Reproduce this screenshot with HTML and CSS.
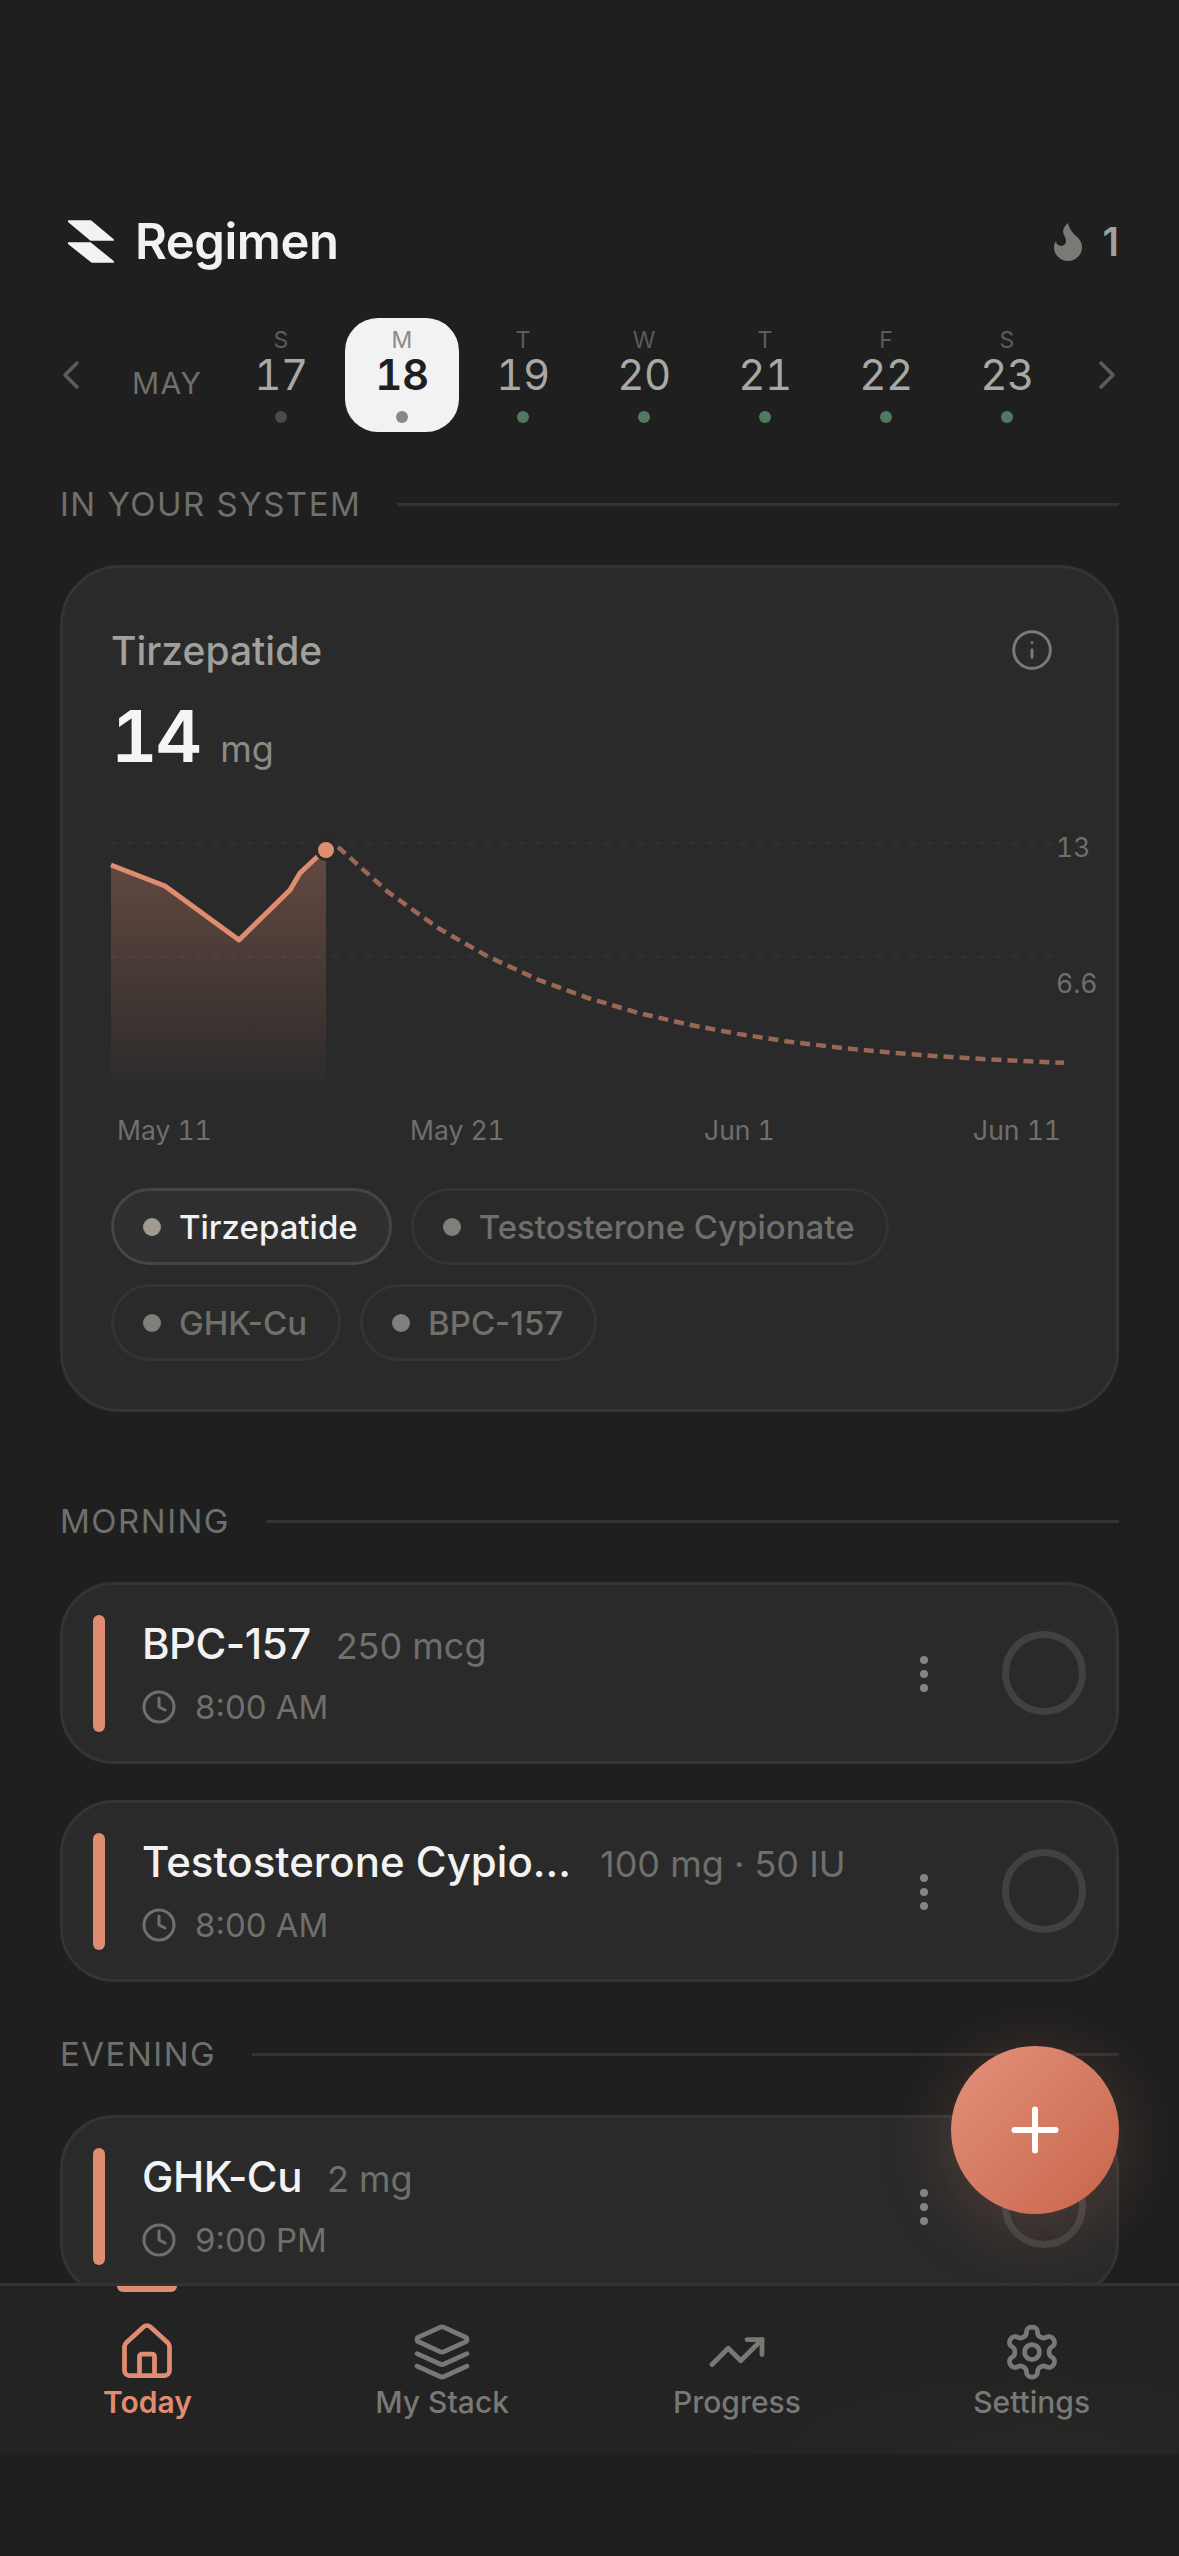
FILE: index.html
```html
<!DOCTYPE html>
<html lang="en">
<head>
  <meta charset="UTF-8">
  <title>Regimen</title>
  <link rel="stylesheet" href="styles.css">
</head>
<body>
<div class="screen">
  <div class="content">

    <header class="topbar">
      <div class="brand">
        <svg class="brand-mark" viewBox="0 0 50 45">
          <path d="M2 1.5a1 1 0 0 1 .7-.3H25L48 20.500v1.200H24.500L2 3z"/>
          <path d="M2 23.300H24.500L48 42.200v1.600H26a1 1 0 0 1-.7-.3L2 25z"/>
        </svg>
        <span class="brand-name">Regimen</span>
      </div>
      <div class="streak">
        <svg class="streak-icon" viewBox="0 0 24 24"><path d="M8.500 14.500A2.500 2.500 0 0 0 11 12c0-1.380-.5-2-1-3-1.072-2.143-.224-4.054 2-6 .5 2.500 2 4.900 4 6.500 2 1.600 3 3.500 3 5.500a7 7 0 1 1-14 0c0-1.153.433-2.294 1-3a2.500 2.500 0 0 0 2.500 2.500z"/></svg>
        <span class="streak-count">1</span>
      </div>
    </header>

    <div class="calendar">
      <svg class="cal-arrow cal-prev" viewBox="0 0 24 24"><path d="m15 18-6-6 6-6"/></svg>
      <span class="cal-month">MAY</span>
      <div class="cal-days">
        <div class="day"><span class="day-letter">S</span><span class="day-num">17</span><i class="day-dot dot-past"></i></div>
        <div class="day day-active"><span class="day-letter">M</span><span class="day-num">18</span><i class="day-dot"></i></div>
        <div class="day"><span class="day-letter">T</span><span class="day-num">19</span><i class="day-dot dot-green"></i></div>
        <div class="day"><span class="day-letter">W</span><span class="day-num">20</span><i class="day-dot dot-green"></i></div>
        <div class="day"><span class="day-letter">T</span><span class="day-num">21</span><i class="day-dot dot-green"></i></div>
        <div class="day"><span class="day-letter">F</span><span class="day-num">22</span><i class="day-dot dot-green"></i></div>
        <div class="day"><span class="day-letter">S</span><span class="day-num">23</span><i class="day-dot dot-green"></i></div>
      </div>
      <svg class="cal-arrow cal-next" viewBox="0 0 24 24"><path d="m9 18 6-6-6-6"/></svg>
    </div>

    <div class="section-head"><span>IN YOUR SYSTEM</span></div>

    <section class="system-card">
      <div class="system-top">
        <span class="system-title">Tirzepatide</span>
        <svg class="info-icon" viewBox="0 0 24 24"><circle cx="12" cy="12" r="10"/><path d="M12 16v-4"/><path d="M12 8h.01"/></svg>
      </div>
      <div class="system-value"><strong>14</strong><span>mg</span></div>

      <svg class="chart" viewBox="0 0 1005 330">
        <defs>
          <linearGradient id="areaFade" x1="0" y1="0" x2="0" y2="1">
            <stop offset="0" stop-color="#e08c70" stop-opacity="0.32"/>
            <stop offset="1" stop-color="#e08c70" stop-opacity="0"/>
          </linearGradient>
        </defs>
        <path class="grid-line" d="M0 23H953"/>
        <path class="grid-line" d="M0 137H953"/>
        <path d="M0 45L54 66L128 120L179 70L189 53L206 37L215 30V275H0z" fill="url(#areaFade)"/>
        <polyline class="line-past" points="0,45 54,66 128,120 179,70 189,53 206,37 215,30"/>
        <polyline class="line-future" points="227,27 277,71.900 327,107.900 377,136.600 427,159.600 477,178 527,192.800 577,204.500 627,213.900 677,221.500 727,227.500 777,232.300 827,236.200 877,239.300 927,241.700 953,242.800"/>
        <circle class="line-dot" cx="215" cy="30" r="9.500"/>
        <text class="axis-label" x="945" y="37">13</text>
        <text class="axis-label" x="945" y="173">6.6</text>
        <text class="axis-label" x="6" y="320">May 11</text>
        <text class="axis-label" x="299" y="320">May 21</text>
        <text class="axis-label" x="593" y="320">Jun 1</text>
        <text class="axis-label" x="950" y="320" text-anchor="end">Jun 11</text>
      </svg>

      <div class="chips">
        <div class="chip chip-active"><i></i>Tirzepatide</div>
        <div class="chip"><i></i>Testosterone Cypionate</div>
        <div class="chip"><i></i>GHK-Cu</div>
        <div class="chip"><i></i>BPC-157</div>
      </div>
    </section>

    <div class="section-head"><span>MORNING</span></div>

    <div class="dose-list">
      <div class="dose">
        <i class="dose-bar"></i>
        <div class="dose-text">
          <div class="dose-top"><span class="dose-name">BPC-157</span><span class="dose-amount">250 mcg</span></div>
          <div class="dose-time">
            <svg viewBox="0 0 24 24"><circle cx="12" cy="12" r="10"/><path d="M12 6v6l4 2"/></svg>
            8:00 AM
          </div>
        </div>
        <div class="dose-more"><i></i><i></i><i></i></div>
        <div class="dose-check"></div>
      </div>

      <div class="dose">
        <i class="dose-bar"></i>
        <div class="dose-text">
          <div class="dose-top"><span class="dose-name name-long">Testosterone Cypio…</span><span class="dose-amount">100 mg · 50 IU</span></div>
          <div class="dose-time">
            <svg viewBox="0 0 24 24"><circle cx="12" cy="12" r="10"/><path d="M12 6v6l4 2"/></svg>
            8:00 AM
          </div>
        </div>
        <div class="dose-more"><i></i><i></i><i></i></div>
        <div class="dose-check"></div>
      </div>
    </div>

    <div class="section-head"><span>EVENING</span></div>

    <div class="dose-list">
      <div class="dose">
        <i class="dose-bar"></i>
        <div class="dose-text">
          <div class="dose-top"><span class="dose-name">GHK-Cu</span><span class="dose-amount">2 mg</span></div>
          <div class="dose-time">
            <svg viewBox="0 0 24 24"><circle cx="12" cy="12" r="10"/><path d="M12 6v6l4 2"/></svg>
            9:00 PM
          </div>
        </div>
        <div class="dose-more"><i></i><i></i><i></i></div>
        <div class="dose-check"></div>
      </div>
    </div>

  </div>

  <nav class="tabbar">
    <div class="tab tab-active">
      <svg viewBox="0 0 24 24">
        <path d="M15 21.400V13.800a1 1 0 0 0-1-1h-4a1 1 0 0 0-1 1v7.600"/>
        <path d="M3 9.800a2 2 0 0 1 .7-1.500l7-6.400a2 2 0 0 1 2.600 0l7 6.400a2 2 0 0 1 .7 1.500v9.600a2 2 0 0 1-2 2H5a2 2 0 0 1-2-2z"/>
      </svg>
      <span>Today</span>
    </div>
    <div class="tab">
      <svg viewBox="0 0 24 24">
        <path d="m12.830 2.180a2 2 0 0 0-1.660 0L2.600 6.080a1 1 0 0 0 0 1.830l8.580 3.910a2 2 0 0 0 1.660 0l8.580-3.900a1 1 0 0 0 0-1.830Z"/>
        <path d="m22 17.650-9.170 4.160a2 2 0 0 1-1.660 0L2 17.650"/>
        <path d="m22 12.650-9.170 4.160a2 2 0 0 1-1.660 0L2 12.650"/>
      </svg>
      <span>My Stack</span>
    </div>
    <div class="tab">
      <svg viewBox="0 0 24 24">
        <polyline points="22 7 13.500 15.500 8.500 10.500 2 17"/>
        <polyline points="16 7 22 7 22 13"/>
      </svg>
      <span>Progress</span>
    </div>
    <div class="tab">
      <svg viewBox="0 0 24 24">
        <path d="M12.220 2h-.44a2 2 0 0 0-2 2v.18a2 2 0 0 1-1 1.730l-.43.25a2 2 0 0 1-2 0l-.15-.08a2 2 0 0 0-2.730.73l-.22.38a2 2 0 0 0 .73 2.730l.15.1a2 2 0 0 1 1 1.720v.51a2 2 0 0 1-1 1.740l-.15.09a2 2 0 0 0-.73 2.730l.22.38a2 2 0 0 0 2.730.73l.15-.08a2 2 0 0 1 2 0l.43.25a2 2 0 0 1 1 1.730V20a2 2 0 0 0 2 2h.44a2 2 0 0 0 2-2v-.18a2 2 0 0 1 1-1.730l.43-.25a2 2 0 0 1 2 0l.15.08a2 2 0 0 0 2.730-.73l.22-.39a2 2 0 0 0-.73-2.730l-.15-.08a2 2 0 0 1-1-1.740v-.5a2 2 0 0 1 1-1.740l.15-.09a2 2 0 0 0 .73-2.730l-.22-.38a2 2 0 0 0-2.730-.73l-.15.08a2 2 0 0 1-2 0l-.43-.25a2 2 0 0 1-1-1.730V4a2 2 0 0 0-2-2z"/>
        <circle cx="12" cy="12" r="3"/>
      </svg>
      <span>Settings</span>
    </div>
  </nav>

  <button class="fab" type="button">
    <svg viewBox="0 0 48 48"><path d="M24 3.500v41M3.500 24h41"/></svg>
  </button>
</div>
</body>
</html>
```

FILE: styles.css
```css
* {
  box-sizing: border-box;
}

body {
  margin: 0;
  background: #1f1f1f;
  font-family: "Inter", "Liberation Sans", sans-serif;
}

.screen {
  position: relative;
  height: 2556px;
  overflow: hidden;
  background: #1f1f1f;
}

.content {
  padding: 210px 60px 0;
}

/* header */
.topbar {
  display: flex;
  justify-content: space-between;
  align-items: center;
  height: 62px;
}

.brand {
  display: flex;
  align-items: center;
  gap: 19px;
}

.brand-mark {
  width: 50px;
  height: 45px;
  margin-left: 6px;
  fill: #f2f2f2;
}

.brand-name {
  font-size: 49px;
  font-weight: 600;
  letter-spacing: -0.5px;
  color: #f2f2f2;
}

.streak {
  display: flex;
  align-items: center;
  gap: 11px;
}

.streak-icon {
  width: 48px;
  height: 48px;
  fill: #7a7a76;
}

.streak-count {
  font-size: 39px;
  font-weight: 600;
  color: #a0a09c;
}

/* week strip */
.calendar {
  display: flex;
  align-items: center;
  margin: 46px -48px 0 -13px;
}

.cal-arrow {
  width: 48px;
  height: 48px;
  fill: none;
  stroke: #5c5c59;
  stroke-width: 1.800;
  stroke-linecap: round;
  stroke-linejoin: round;
}

.cal-month {
  width: 129px;
  padding: 15px 0 0 37px;
  font-size: 30px;
  letter-spacing: 1.500px;
  color: #6f6f6b;
}

.cal-days {
  display: flex;
  gap: 7px;
  margin-right: 19px;
}

.day {
  display: flex;
  flex-direction: column;
  align-items: center;
  width: 114px;
  height: 114px;
  padding-top: 10px;
  border-radius: 33px;
}

.day-letter {
  height: 24px;
  line-height: 24px;
  font-size: 23px;
  color: #5c5c59;
}

.day-num {
  height: 50px;
  margin-top: -2px;
  line-height: 50px;
  font-size: 42px;
  letter-spacing: -0.500px;
  font-variant-numeric: tabular-nums;
  color: #a8a8a4;
}

.day-dot {
  width: 12px;
  height: 12px;
  margin-top: 11px;
  border-radius: 50%;
  background: #888886;
}

.dot-past {
  background: #4a4a48;
}

.dot-green {
  background: #4f7a5f;
}

.day-active {
  background: #f2f2f2;
}

.day-active .day-letter {
  color: #8a8a86;
}

.day-active .day-num {
  font-weight: 600;
  color: #1f1f1f;
}

/* section headings */
.section-head {
  display: flex;
  align-items: center;
  gap: 36px;
  height: 40px;
  margin: 52px 0 41px;
  font-size: 33px;
  letter-spacing: 1.500px;
  color: #6f6f6b;
}

.section-head::after {
  content: "";
  flex: 1;
  height: 3px;
  background: #333331;
}

/* in your system card */
.system-card {
  height: 847px;
  margin-bottom: 89px;
  padding: 58px 48px 0;
  border: 3px solid #343434;
  border-radius: 60px;
  background: #2a2a2a;
}

.system-top {
  display: flex;
  justify-content: space-between;
  align-items: center;
  height: 48px;
}

.system-title {
  font-size: 39px;
  font-weight: 500;
  color: #a0a09c;
}

.info-icon {
  width: 44px;
  height: 44px;
  margin-right: 14px;
  fill: none;
  stroke: #7a7a76;
  stroke-width: 1.600;
  stroke-linecap: round;
}

.system-value {
  display: flex;
  align-items: baseline;
  gap: 20px;
  height: 72px;
  margin-top: 26px;
  line-height: 72px;
}

.system-value strong {
  font-size: 72px;
  font-weight: 600;
  letter-spacing: -2px;
  font-variant-numeric: tabular-nums;
  color: #f5f5f5;
}

.system-value span {
  font-size: 36px;
  color: #8a8a86;
}

.chart {
  display: block;
  width: 1005px;
  height: 330px;
  margin-top: 48px;
  overflow: visible;
}

.grid-line {
  fill: none;
  stroke: #ffffff;
  stroke-opacity: 0.035;
  stroke-width: 3;
  stroke-dasharray: 6 11;
}

.line-past {
  fill: none;
  stroke: #e08c70;
  stroke-width: 5;
  stroke-linejoin: round;
}

.line-future {
  fill: none;
  stroke: #e08c70;
  stroke-opacity: 0.62;
  stroke-width: 4.500;
  stroke-dasharray: 10 6;
}

.line-dot {
  fill: #e08c70;
  stroke: #2a2a2a;
  stroke-width: 3;
}

.axis-label {
  font-size: 26.500px;
  font-variant-numeric: tabular-nums;
  fill: #6f6f6b;
}

.chips {
  display: flex;
  flex-wrap: wrap;
  gap: 19px;
  margin-top: 38px;
}

.chip {
  display: flex;
  align-items: center;
  gap: 18px;
  height: 77px;
  padding: 0 31px 0 29px;
  border: 3px solid #343434;
  border-radius: 39px;
  font-size: 33px;
  font-weight: 500;
  color: #6f6f6b;
}

.chip i {
  width: 18px;
  height: 18px;
  border-radius: 50%;
  background: #7f7f7b;
}

.chip-active {
  border-color: #454543;
  background: #2f2f2f;
  color: #f2f2f2;
}

.chip-active i {
  background: #a09a90;
}

/* dose rows */
.dose-list {
  display: flex;
  flex-direction: column;
  gap: 36px;
}

.dose {
  display: flex;
  align-items: center;
  flex: none;
  height: 182px;
  padding: 0 30px 0 30px;
  border: 3px solid #343434;
  border-radius: 54px;
  background: #2a2a2a;
}

.dose-bar {
  width: 12px;
  height: 117px;
  border-radius: 6px;
  background: #e08c70;
}

.dose-text {
  margin-left: 37px;
}

.dose-top {
  display: flex;
  align-items: baseline;
  gap: 25px;
  height: 50px;
  line-height: 50px;
}

.dose-name {
  font-size: 42px;
  font-weight: 500;
  letter-spacing: -0.500px;
  color: #f2f2f2;
}

.name-long {
  margin-right: 4px;
  letter-spacing: 0;
}

.dose-amount {
  font-size: 36px;
  color: #6f6f6b;
}

.dose-time {
  display: flex;
  align-items: center;
  gap: 18px;
  height: 40px;
  margin-top: 18px;
  font-size: 33px;
  color: #6f6f6b;
}

.dose-time svg {
  width: 36px;
  height: 36px;
  margin-left: -1px;
  fill: none;
  stroke: #6f6f6b;
  stroke-width: 2;
  stroke-linecap: round;
  stroke-linejoin: round;
}

.dose-more {
  display: flex;
  flex-direction: column;
  gap: 6px;
  margin: 2px 74px 0 auto;
}

.dose-more i {
  width: 8px;
  height: 8px;
  border-radius: 50%;
  background: #858582;
}

.dose-check {
  width: 84px;
  height: 84px;
  border: 7px solid #414140;
  border-radius: 50%;
}

/* bottom tabs */
.tabbar {
  position: absolute;
  left: 0;
  right: 0;
  top: 2283px;
  display: flex;
  height: 171px;
  padding-top: 36px;
  border-top: 3px solid #333331;
  background: radial-gradient(ellipse 300px 90px at 88% 100%, rgba(224, 140, 112, 0.03), transparent), #232323;
}

.tab {
  position: relative;
  display: flex;
  flex-direction: column;
  align-items: center;
  flex: 1;
  font-size: 30px;
  font-weight: 500;
  line-height: 40px;
  color: #787875;
}

.tab svg {
  width: 60px;
  height: 60px;
  fill: none;
  stroke: currentColor;
  stroke-width: 1.900;
  stroke-linecap: round;
  stroke-linejoin: round;
}

.tab-active {
  font-weight: 600;
  color: #e08c70;
}

.tab-active::before {
  content: "";
  position: absolute;
  top: -36px;
  width: 60px;
  height: 6px;
  border-radius: 0 0 6px 6px;
  background: #e08c70;
}

/* add button */
.fab {
  position: absolute;
  right: 60px;
  bottom: 342px;
  display: flex;
  align-items: center;
  justify-content: center;
  width: 168px;
  height: 168px;
  padding: 0;
  border: 0;
  border-radius: 50%;
  background: linear-gradient(135deg, #e3917a, #c8654b);
  box-shadow: 0 12px 72px rgba(224, 140, 112, 0.22);
}

.fab svg {
  width: 48px;
  height: 48px;
  fill: none;
  stroke: #ffffff;
  stroke-width: 6;
  stroke-linecap: round;
}
```
